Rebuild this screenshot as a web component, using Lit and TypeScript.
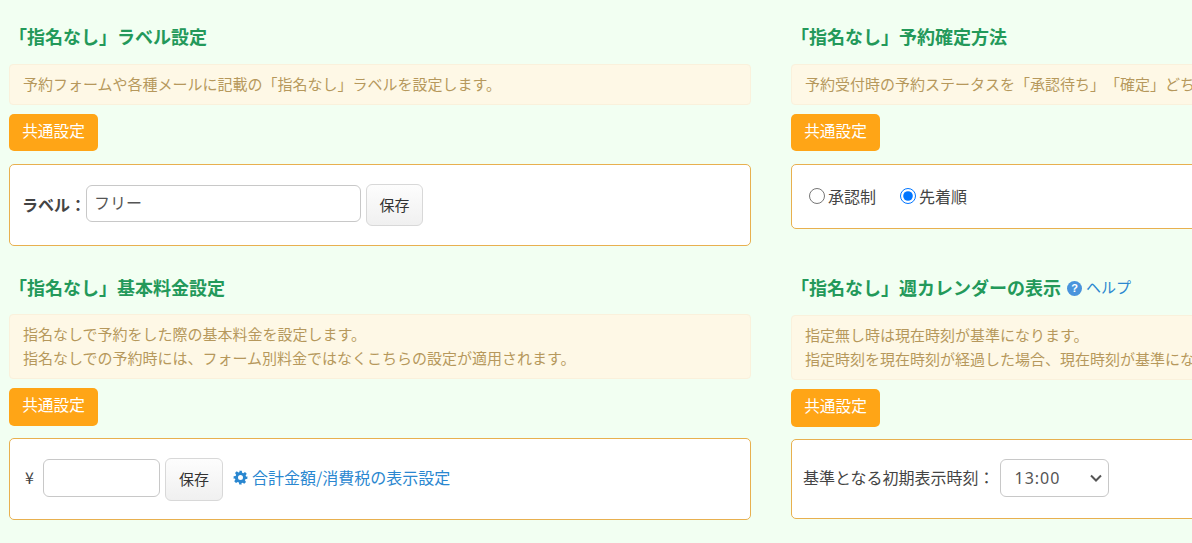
import { LitElement, html, css } from "lit";
import { customElement } from "lit/decorators.js";

@customElement("app-root")
export class AppRoot extends LitElement {
  static styles = css`
    :host {
      display: block;
      width: 1192px;
      height: 543px;
      overflow: hidden;
      background: #f2fff2;
      font-family: "Noto Sans CJK JP", "Noto Sans", sans-serif;
      font-size: 16px;
      color: #444;
      text-spacing-trim: space-all;
    }
    .page {
      display: grid;
      grid-template-columns: 742px 742px;
      column-gap: 40px;
      row-gap: 30px;
      padding: 25px 0 0 9px;
      width: 1600px;
      box-sizing: border-box;
    }
    h2 {
      margin: 0;
      box-sizing: border-box;
      height: 24px;
      padding-bottom: 2px;
      display: flex;
      align-items: center;
      font-size: 18px;
      line-height: 22px;
      font-weight: 700;
      color: #23995a;
      white-space: nowrap;
    }
    .help {
      margin-left: 6px;
      display: inline-flex;
      align-items: center;
      gap: 4px;
      font-size: 15px;
      font-weight: 400;
      color: #2a87d0;
    }
    .help-dot {
      width: 15px;
      height: 15px;
      margin-top: 2px;
      border-radius: 50%;
      background: #4a94dc;
      color: #fff;
      font: 700 11px/15px "Liberation Sans", sans-serif;
      text-align: center;
    }
    .alert {
      margin-top: 15px;
      box-sizing: border-box;
      padding: 7px 13px 8px;
      border: 1px solid #faf1dc;
      border-radius: 4px;
      background: #fef8e6;
      color: #b6985c;
      font-size: 15px;
      line-height: 24px;
      white-space: nowrap;
      overflow: hidden;
    }
    .shared {
      display: block;
      margin-top: 9px;
      width: 89px;
      height: 37px;
      padding: 0 0 5px;
      border: 0;
      border-radius: 5px;
      background: #ffa516;
      color: #fff;
      font: inherit;
      font-size: 15.7px;
    }
    .box {
      margin-top: 13px;
      box-sizing: border-box;
      display: flex;
      align-items: center;
      height: 82px;
      padding: 0 12px;
      background: #fff;
      border: 1px solid #e8b04f;
      border-radius: 5px;
    }
    .lower .shared { height: 38px; }
    .lower .box { margin-top: 12px; }
    .lower-left .alert { margin-top: 14px; }
    .box.radios { height: 65px; padding-left: 17px; }
    .box.time { height: 80px; padding-left: 11px; }
    .box.price { padding-left: 15px; }
    .tx { margin-bottom: 4px; white-space: nowrap; }
    .lab { font-weight: 700; white-space: nowrap; margin-bottom: 3px; }
    input.text {
      box-sizing: border-box;
      height: 37px;
      margin-bottom: 3px;
      padding: 0 7px 4px;
      border: 1px solid #c8c8c8;
      border-radius: 6px;
      background: #fff;
      font: inherit;
      color: #555;
    }
    .wide { width: 275px; }
    input.short { width: 117px; margin-left: 9px; height: 38px; }
    .save {
      box-sizing: border-box;
      margin-left: 5px;
      width: 57px;
      height: 42px;
      padding: 0 0 2px;
      border: 1px solid #d8d8d8;
      border-radius: 6px;
      background: linear-gradient(#fdfdfd, #f0f0f0);
      color: #333;
      font: inherit;
      font-size: 15px;
    }
    .price .save { width: 58px; height: 43px; }
    .link {
      margin: 0 0 4px 10px;
      display: inline-flex;
      align-items: center;
      gap: 4px;
      color: #2a87d0;
      white-space: nowrap;
    }
    .link svg { margin-top: 1px; }
    .radio { display: inline-flex; align-items: center; margin-right: 24px; white-space: nowrap; margin-bottom: 2px; }
    .radio input { width: 16px; height: 16px; margin: 1px 3px 0 0; }
    select {
      appearance: none;
      box-sizing: border-box;
      margin-left: 5px;
      margin-bottom: 2px;
      width: 109px;
      height: 38px;
      padding: 0 14px;
      border: 1px solid #c8c8c8;
      border-radius: 6px;
      background: #fff url("data:image/svg+xml,%3Csvg xmlns='http://www.w3.org/2000/svg' width='12' height='8'%3E%3Cpath d='M1 1.5l5 5 5-5' fill='none' stroke='%23555' stroke-width='2'/%3E%3C/svg%3E") no-repeat right 6px center;
      color: #555;
      font-family: "Noto Sans", sans-serif;
      font-size: 16px;
      letter-spacing: 1px;
    }
  `;

  render() {
    const shared = html`<button class="shared">共通設定</button>`;
    return html`
      <div class="page">
        <section>
          <h2>「指名なし」ラベル設定</h2>
          <div class="alert">予約フォームや各種メールに記載の「指名なし」ラベルを設定します。</div>
          ${shared}
          <div class="box">
            <span class="lab">ラベル：</span>
            <input class="text wide" value="フリー" />
            <button class="save">保存</button>
          </div>
        </section>
        <section>
          <h2>「指名なし」予約確定方法</h2>
          <div class="alert">予約受付時の予約ステータスを「承認待ち」「確定」どちらにするかを設定します。</div>
          ${shared}
          <div class="box radios">
            <label class="radio"><input type="radio" name="m" />承認制</label>
            <label class="radio"><input type="radio" name="m" checked />先着順</label>
          </div>
        </section>
        <section class="lower lower-left">
          <h2>「指名なし」基本料金設定</h2>
          <div class="alert">指名なしで予約をした際の基本料金を設定します。<br />指名なしでの予約時には、フォーム別料金ではなくこちらの設定が適用されます。</div>
          ${shared}
          <div class="box price">
            <span class="tx">¥</span>
            <input class="text short" />
            <button class="save">保存</button>
            <span class="link">
              <svg width="15" height="15" viewBox="0 0 24 24" fill="#2a87d0"><path fill-rule="evenodd" d="M10 1h4l.6 3.2 1.9.8 2.7-1.8 2.8 2.8-1.8 2.7.8 1.9L23 10v4l-3.2.6-.8 1.9 1.8 2.7-2.8 2.8-2.7-1.8-1.9.8L14 23h-4l-.6-3.2-1.9-.8-2.7 1.8-2.8-2.8 1.8-2.7-.8-1.9L1 14v-4l3.2-.6.8-1.9-1.8-2.7 2.8-2.8 2.7 1.8 1.9-.8zM12 8a4 4 0 1 0 0 8 4 4 0 0 0 0-8z"/></svg>
              合計金額/消費税の表示設定
            </span>
          </div>
        </section>
        <section class="lower">
          <h2>「指名なし」週カレンダーの表示<span class="help"><span class="help-dot">?</span>ヘルプ</span></h2>
          <div class="alert">指定無し時は現在時刻が基準になります。<br />指定時刻を現在時刻が経過した場合、現在時刻が基準になります。</div>
          ${shared}
          <div class="box time">
            <span class="tx">基準となる初期表示時刻：</span>
            <select><option>13:00</option></select>
          </div>
        </section>
      </div>
    `;
  }
}
